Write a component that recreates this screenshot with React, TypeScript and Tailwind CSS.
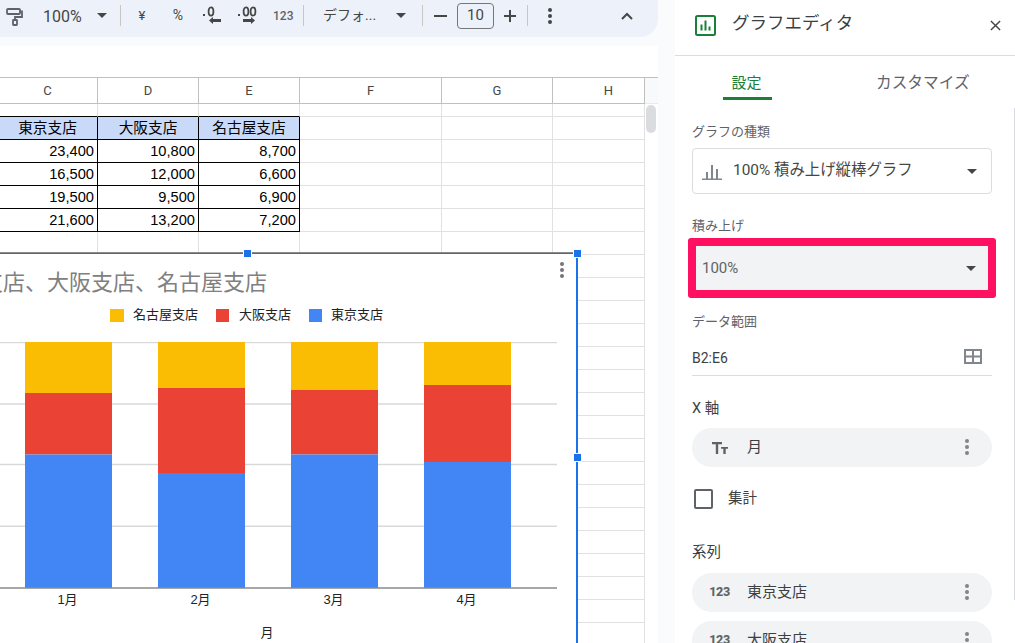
const columns = [
  { label: 'C', width: 'w-[98px]' },
  { label: 'D', width: 'w-[101px]' },
  { label: 'E', width: 'w-[101px]' },
  { label: 'F', width: 'w-[142px]' },
  { label: 'G', width: 'w-[111px]' },
  { label: 'H', width: 'w-[92px]' },
];

const tableRows = [
  ['23,400', '10,800', '8,700'],
  ['16,500', '12,000', '6,600'],
  ['19,500', '9,500', '6,900'],
  ['21,600', '13,200', '7,200'],
];

const blankRows = Array.from({ length: 18 }, (_, i) => i);

const bars = [
  { x: 25, yellow: 51, red: 61.5 },
  { x: 158, yellow: 46, red: 85 },
  { x: 291, yellow: 48, red: 64.5 },
  { x: 424, yellow: 43, red: 77 },
];

function Caret({ className = '' }: { className?: string }) {
  return (
    <svg width="10" height="5" viewBox="0 0 10 5" className={className}>
      <path d="M0 0h10L5 5z" fill="currentColor" />
    </svg>
  );
}

function Separator({ className = '' }: { className?: string }) {
  return <div className={`w-px h-[21px] bg-[#c7c7c7] ${className}`} />;
}

function Dots({ className = '' }: { className?: string }) {
  return (
    <div className={`flex flex-col gap-[2px] ${className}`}>
      <div className="w-1 h-1 rounded-full bg-current" />
      <div className="w-1 h-1 rounded-full bg-current" />
      <div className="w-1 h-1 rounded-full bg-current" />
    </div>
  );
}

function Toolbar() {
  return (
    <div className="h-[37px] bg-[#edf2fa] rounded-br-[18px] flex items-center pb-[6px] text-[#444746]">
      <svg width="18" height="18" viewBox="0 0 18 18" className="ml-[5px] mt-[3px]" fill="none" stroke="#5f6368" strokeWidth="1.800">
        <rect x="2" y="1" width="13" height="5" rx="1" />
        <path d="M15 3.500h2v5.500H10v3" />
        <rect x="8" y="12" width="4" height="5" rx="0.500" />
      </svg>
      <span className="ml-[20px] mt-[2px] w-[40px] text-[16px]">100%</span>
      <Caret className="ml-[14px]" />
      <Separator className="ml-[13px]" />
      <span className="ml-[16px] w-[10px] text-[13px] text-center">¥</span>
      <span className="ml-[25px] w-[12px] text-[14px] text-center">%</span>
      <svg width="19" height="19" viewBox="0 0 19 19" className="ml-[19px]" fill="#444746">
        <rect x="0" y="8" width="2" height="2" />
        <ellipse cx="8" cy="5.500" rx="2.400" ry="4.200" fill="none" stroke="#444746" strokeWidth="1.800" />
        <path d="M18 13H10V11L6 14.500l4 3.500V16h8z" />
      </svg>
      <svg width="20" height="19" viewBox="0 0 20 19" className="ml-[16px]" fill="#444746">
        <rect x="0" y="8" width="2" height="2" />
        <ellipse cx="8" cy="5.500" rx="2.400" ry="4.200" fill="none" stroke="#444746" strokeWidth="1.800" />
        <ellipse cx="15" cy="5.500" rx="2.400" ry="4.200" fill="none" stroke="#444746" strokeWidth="1.800" />
        <path d="M5 13h8v-2l4 3.500-4 3.500v-2H5z" />
      </svg>
      <span className="ml-[15px] w-[22px] text-[12px] font-medium text-[#5f6368]">123</span>
      <Separator className="ml-[8px]" />
      <span className="ml-[19px] w-[58px] text-[14px] whitespace-nowrap">デフォ...</span>
      <Caret className="ml-[15px]" />
      <Separator className="ml-[16px]" />
      <div className="ml-[11px] w-[13px] h-[2px] bg-[#444746]" />
      <div className="ml-[10px] w-[37px] h-[26px] border border-[#747775] rounded-[4px] flex items-center justify-center text-[15px]">10</div>
      <svg width="12" height="12" viewBox="0 0 12 12" className="ml-[10px]">
        <path d="M5 0h2v5h5v2H7v5H5V7H0V5h5z" fill="#444746" />
      </svg>
      <Separator className="ml-[11px]" />
      <Dots className="ml-[20px]" />
      <svg width="12" height="8" viewBox="0 0 12 8" className="ml-[69px]" fill="none" stroke="#444746" strokeWidth="2">
        <path d="M1 7l5-5 5 5" />
      </svg>
    </div>
  );
}

function Cell({ width, className = '', children }: { width: string; className?: string; children?: React.ReactNode }) {
  return (
    <div className={`${width} shrink-0 h-full border-r border-b flex items-center ${className}`}>{children}</div>
  );
}

function Sheet() {
  return (
    <div className="relative flex-1 min-h-0 bg-white overflow-hidden font-['Liberation_Sans','Noto_Sans_CJK_JP',sans-serif] text-[14.67px] text-black">
      {/* Column letters */}
      <div className="flex h-[27px] border-t border-[#c0c0c0] font-['Roboto',sans-serif] text-[13px] text-[#444746]">
        {columns.map((col) => (
          <Cell
            key={col.label}
            width={col.width}
            className={
              col.label === 'H'
                ? 'justify-center pl-[20px] border-[#c0c0c0]'
                : col.label === 'C'
                  ? 'justify-center pr-[2px] border-[#c0c0c0]'
                  : 'justify-center border-[#c0c0c0]'
            }
          >
            {col.label}
          </Cell>
        ))}
        <div className="flex-1 h-full border-b border-[#e8eaed] bg-[#f8f9fa]" />
      </div>

      {/* Short first row */}
      <div className="flex h-[13px]">
        {columns.map((col, i) => (
          <Cell key={col.label} width={col.width} className={i < 3 ? 'border-r-[#e1e1e1] border-b-black' : 'border-[#e1e1e1]'} />
        ))}
      </div>

      {/* Table header */}
      <div className="flex h-[23px]">
        {['東京支店', '大阪支店', '名古屋支店'].map((name, i) => (
          <Cell
            key={name}
            width={columns[i].width}
            className={i === 0 ? 'justify-center pr-[2px] bg-[#c9daf8] border-black' : 'justify-center bg-[#c9daf8] border-black'}
          >
            {name}
          </Cell>
        ))}
        {columns.slice(3).map((col) => (
          <Cell key={col.label} width={col.width} className="border-[#e1e1e1]" />
        ))}
      </div>

      {/* Table values */}
      {tableRows.map((row) => (
        <div key={row[0]} className="flex h-[23px]">
          {row.map((value, i) => (
            <Cell key={i} width={columns[i].width} className="justify-end pr-[3px] border-black">
              {value}
            </Cell>
          ))}
          {columns.slice(3).map((col) => (
            <Cell key={col.label} width={col.width} className="border-[#e1e1e1]" />
          ))}
        </div>
      ))}

      {/* Empty rows */}
      {blankRows.map((row) => (
        <div key={row} className="flex h-[23px]">
          {columns.map((col) => (
            <Cell key={col.label} width={col.width} className="border-[#e1e1e1]" />
          ))}
        </div>
      ))}

      {/* Scroll thumb */}
      <div className="absolute left-[646px] top-[28px] w-[10px] h-[28px] rounded-full bg-[#dadce0]" />

      <Chart />
    </div>
  );
}

function Chart() {
  return (
    <div className="absolute left-0 top-[175px] w-[578px] h-[400px]">
      <div className="h-full bg-white border-t border-r-2 border-t-[#8a8a8a] border-r-[#1a73e8] overflow-hidden font-['Liberation_Sans','Noto_Sans_CJK_JP',sans-serif]">
        <div className="h-px bg-[#1a73e8]" />
        <div className="mt-[16px] h-[24px] w-[267px] flex justify-end items-center whitespace-nowrap text-[22px] text-[#808080]">
          東京支店、大阪支店、名古屋支店
        </div>
        <div className="mt-[12px] h-[18px] pl-[110px] flex items-center text-[13px] text-[#222222]">
          <div className="w-[14px] h-[13px] bg-[#fbbc04]" />
          <span className="ml-[9px] w-[66px] whitespace-nowrap">名古屋支店</span>
          <div className="ml-[17px] w-[13px] h-[13px] bg-[#ea4335]" />
          <span className="ml-[10px] w-[52px] whitespace-nowrap">大阪支店</span>
          <div className="ml-[18px] w-[13px] h-[13px] bg-[#4285f4]" />
          <span className="ml-[9px] whitespace-nowrap">東京支店</span>
        </div>
        <svg width="557" height="250" viewBox="0 0 557 250" className="mt-[18px] block">
          <path d="M0 .5h557M0 62h557M0 122.500h557M0 184.300h557" stroke="#d9d9d9" strokeWidth="1.500" fill="none" />
          {bars.map((bar) => (
            <g key={bar.x}>
              <rect x={bar.x} y="0" width="87" height={bar.yellow} fill="#fbbc04" />
              <rect x={bar.x} y={bar.yellow} width="87" height={bar.red} fill="#ea4335" />
              <rect x={bar.x} y={bar.yellow + bar.red} width="87" height={246 - bar.yellow - bar.red} fill="#4285f4" />
            </g>
          ))}
          <path d="M0 246h557" stroke="#8a8a8a" strokeWidth="1.500" fill="none" />
        </svg>
        <div className="flex h-[16px] items-center text-[13px] text-[#222222] pl-px">
          {['1月', '2月', '3月', '4月'].map((label) => (
            <div key={label} className="w-[133px] text-center">{label}</div>
          ))}
        </div>
        <div className="mt-[17px] h-[16px] w-[534px] text-center text-[13px] leading-[16px] text-[#222222]">月</div>
      </div>

      {/* Selection handles and the chart menu */}
      <Dots className="absolute left-[560px] top-[10px] text-[#757575]" />
      <div className="absolute left-[243px] top-[-3px] w-[9px] h-[9px] bg-[#1a73e8] border border-white" />
      <div className="absolute left-[573px] top-[-3px] w-[9px] h-[9px] bg-[#1a73e8] border border-white" />
      <div className="absolute left-[573px] top-[201px] w-[9px] h-[9px] bg-[#1a73e8] border border-white" />
    </div>
  );
}

function Chip({ icon, label, className = '' }: { icon: React.ReactNode; label: string; className?: string }) {
  return (
    <div className={`h-[39px] shrink-0 rounded-full bg-[#f1f3f4] flex items-center text-[15px] text-[#3c4043] ${className}`}>
      <div className="w-[55px] flex justify-center shrink-0">{icon}</div>
      <span className="flex-1">{label}</span>
      <Dots className="mr-[23px] text-[#80868b] mb-[2px]" />
    </div>
  );
}

function Panel() {
  return (
    <div className="relative w-[340px] shrink-0 h-full bg-white overflow-hidden text-[#3c4043]">
      <div className="h-[56px] border-b border-[#dadce0] flex items-center pl-[20px]">
        <svg width="21" height="21" viewBox="0 0 21 21" fill="none" className="mb-[4px]">
          <rect x="1" y="1" width="19" height="19" rx="1.500" stroke="#188038" strokeWidth="2" />
          <path d="M5.500 9.500h2v6h-2zM9.500 5.500h2v10h-2zM13.500 11.500h2v4h-2z" fill="#188038" />
        </svg>
        <span className="ml-[16px] mb-[8px] text-[17.500px] whitespace-nowrap">グラフエディタ</span>
        <svg width="11" height="11" viewBox="0 0 12 12" className="ml-[137px] mb-[4px]" stroke="#444746" strokeWidth="1.600">
          <path d="M1 1l10 10M11 1L1 11" />
        </svg>
      </div>

      <div className="flex h-[44px] pl-[48px]">
        <div className="w-[49px] h-full border-b-[3px] border-[#188038] flex justify-center pt-[16px] pr-[2px] text-[15px] leading-[22px] text-[#188038]">
          設定
        </div>
        <div className="ml-[104px] pt-[16px] text-[15.700px] leading-[22px] text-[#5f6368] whitespace-nowrap">カスタマイズ</div>
      </div>

      <div className="px-[17px] w-[334px] flex flex-col">
        <div className="mt-[22px] h-[20px] text-[13px] leading-[20px] text-[#5f6368]">グラフの種類</div>
        <div className="mt-[6px] h-[46px] border border-[#dadce0] rounded-[4px] flex items-center text-[#444746]">
          <svg width="20" height="17" viewBox="0 0 20 17" className="ml-[9px]" fill="#80868b">
            <path d="M0 15.500h20V17H0zM4 9h2v6.500H4zM9 2h2v13.500H9zM14 6h2v9.500h-2z" />
          </svg>
          <span className="ml-[11px] flex-1 text-[15.400px]">100% 積み上げ縦棒グラフ</span>
          <Caret className="mr-[14px]" />
        </div>
        <div className="mt-[22px] h-[20px] text-[13px] leading-[20px] text-[#5f6368]">積み上げ</div>
        <div className="mt-[2px] -mx-[4px] h-[60px] border-[8px] border-[#ff1060] rounded-[3px] bg-[#f1f3f4] flex items-center pl-[6px] text-[15px] text-[#5f6368]">
          <span className="flex-1">100%</span>
          <Caret className="mr-[12px] text-[#444746]" />
        </div>
        <div className="mt-[14px] h-[20px] text-[13px] leading-[20px] text-[#5f6368]">データ範囲</div>
        <div className="mt-[18px] h-[26px] border-b border-[#dadce0] flex items-start justify-between text-[14px] leading-[16px] text-[#3c4043]">
          <span>B2:E6</span>
          <svg width="18" height="15" viewBox="0 0 18 15" className="mr-[10px] -mt-[1px]" fill="none" stroke="#80868b" strokeWidth="2">
            <path d="M1 1h16v13H1zM9 1v13M1 7.500h16" />
          </svg>
        </div>
        <div className="mt-[23px] h-[20px] text-[14.500px] leading-[20px] text-[#3c4043]">X 軸</div>
        <Chip
          className="mt-[9px]"
          label="月"
          icon={
            <svg width="16" height="12" viewBox="0 0 16 12" fill="#5f6368">
              <path d="M0 0h10v2.200H6.200V12H3.800V2.200H0zM9 5h7v1.800h-2.300V12h-2.400V6.800H9z" />
            </svg>
          }
        />
        <div className="mt-[22px] h-[20px] flex items-center text-[14.500px] text-[#3c4043]">
          <div className="ml-[2px] w-[19px] h-[20px] border-2 border-[#5f6368] rounded-[2px]" />
          <span className="ml-[15px]">集計</span>
        </div>
        <div className="mt-[34px] h-[20px] text-[14.500px] leading-[20px] text-[#3c4043]">系列</div>
        <Chip
          className="mt-[10px]"
          label="東京支店"
          icon={<span className="text-[12.500px] font-extrabold tracking-tight text-[#5f6368]">123</span>}
        />
        <Chip
          className="mt-[9px]"
          label="大阪支店"
          icon={<span className="text-[12.500px] font-extrabold tracking-tight text-[#5f6368]">123</span>}
        />
      </div>

      {/* Panel scroll track */}
      <div className="absolute right-0 top-[108px] w-px h-[492px] bg-[#dadce0]" />
    </div>
  );
}

export default function App() {
  return (
    <div className="w-[1015px] h-[643px] flex overflow-hidden bg-[#f9fbfd] font-['Roboto','Noto_Sans_CJK_JP',sans-serif]">
      <div className="w-[658px] shrink-0 h-full flex flex-col">
        <Toolbar />
        <div className="mt-[9px] h-[31px] bg-white shrink-0" />
        <Sheet />
      </div>
      <div className="w-[17px] shrink-0" />
      <Panel />
    </div>
  );
}
